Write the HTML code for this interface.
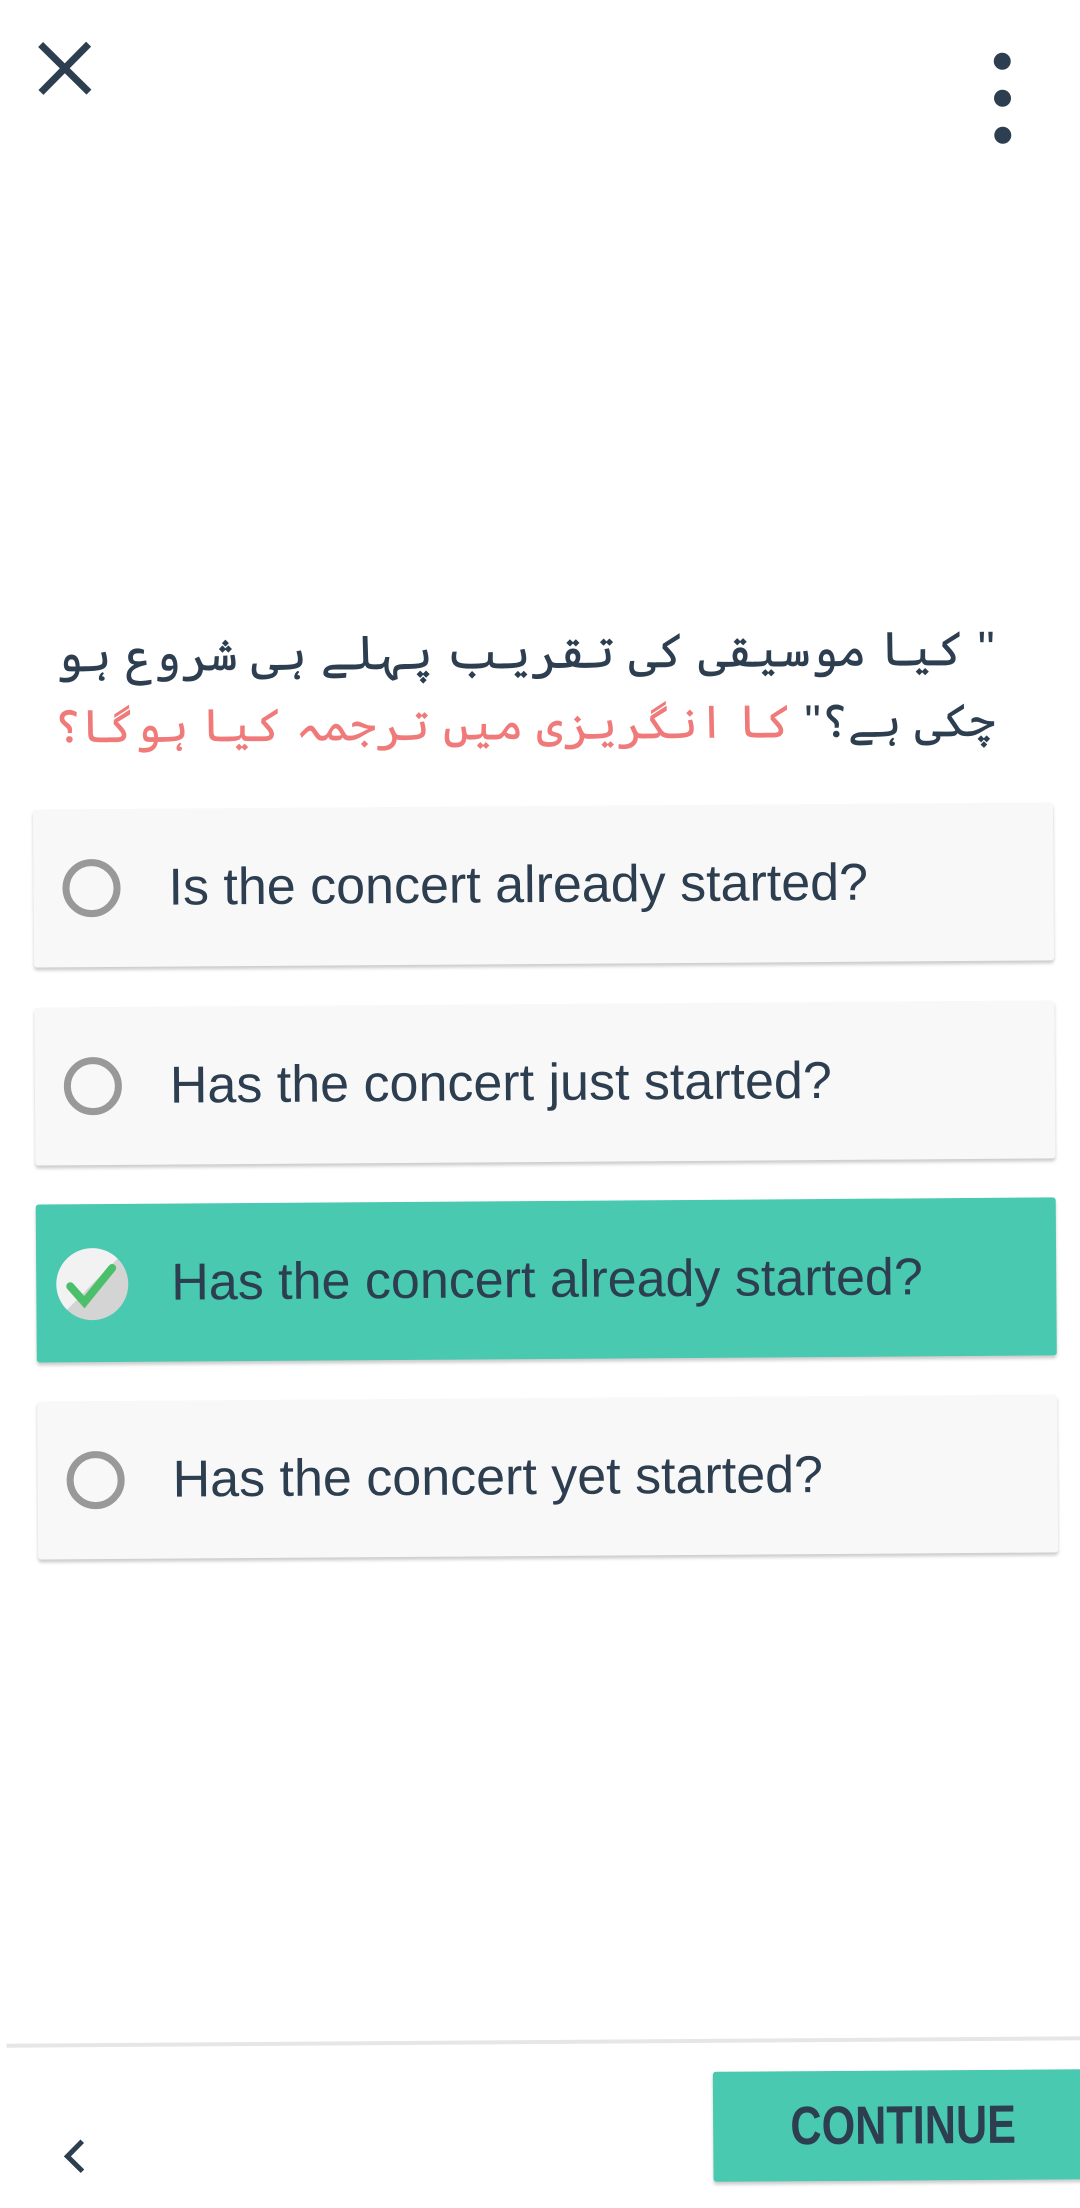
<!DOCTYPE html>
<html><head><meta charset="utf-8"><style>
html,body{margin:0;padding:0;width:1080px;height:2204px;background:#fff;overflow:hidden;font-family:"Liberation Sans",sans-serif;}
.w{position:absolute;left:0;top:0;width:1080px;height:2204px;transform:rotate(-0.4deg);transform-origin:540px 1100px;}
.q{position:absolute;left:20px;width:978px;top:618px;direction:rtl;text-align:right;white-space:nowrap;font-family:"Liberation Sans","Noto Sans CJK SC",sans-serif;font-size:48px;line-height:70px;color:#2c3e50;}
.q span{color:#f07a7a}
.l2{font-size:46px;letter-spacing:-1px}
.card{position:absolute;left:35px;width:1020px;height:158px;background:#f8f8f8;box-shadow:0 3px 3px rgba(0,0,0,.2);border-radius:3px;}
.card.sel{background:#48c9b0}
.card .t{position:absolute;left:135px;top:0;line-height:158px;font-size:52px;color:#2c3e50;}
.radio{position:absolute;left:29px;top:50px;width:44px;height:44px;border:7px solid #999;border-radius:50%;}
.chk{position:absolute;left:20px;top:44px;width:72px;height:72px;border-radius:50%;background:linear-gradient(135deg,#f2f2f2 50%,#d4d4d4 50%);}
</style></head><body>
<div class="w">
<svg style="position:absolute;left:45px;top:38px" width="54" height="54" viewBox="0 0 54 54"><path d="M3 3L51 51M51 3L3 51" stroke="#2c3e50" stroke-width="7"/></svg>
<div style="position:absolute;left:1001px;top:56px;width:17px;height:17px;border-radius:50%;background:#2c3e50"></div>
<div style="position:absolute;left:1001px;top:93px;width:17px;height:17px;border-radius:50%;background:#2c3e50"></div>
<div style="position:absolute;left:1001px;top:130px;width:17px;height:17px;border-radius:50%;background:#2c3e50"></div>
<div class="q">" کیا موسیقی کی تقریب پہلے ہی شروع ہو<br><span class="l2" style="color:#2c3e50">چکی ہے؟" </span><span class="l2">کا انگریزی میں ترجمہ کیا ہوگا؟</span></div>
<div class="card" style="top:806px"><div class="radio"></div><div class="t">Is the concert already started?</div></div>
<div class="card" style="top:1004px"><div class="radio"></div><div class="t">Has the concert just started?</div></div>
<div class="card sel" style="top:1201px"><div class="chk"><svg width="72" height="72" viewBox="0 0 72 72"><path d="M14 38L28 54L56 20" fill="none" stroke="#4cbf6a" stroke-width="8" stroke-linecap="round"/></svg></div><div class="t">Has the concert already started?</div></div>
<div class="card" style="top:1398px"><div class="radio"></div><div class="t">Has the concert yet started?</div></div>
<div style="position:absolute;left:0;top:2040px;width:1080px;height:4px;background:#e6e6e6"></div>
<svg style="position:absolute;left:55px;top:2135px" width="24" height="36" viewBox="0 0 24 36"><path d="M20 3L5 18L20 33" fill="none" stroke="#2c3e50" stroke-width="5"/></svg>
<div style="position:absolute;left:706px;top:2073px;width:390px;height:110px;background:#48c9b0;border-radius:3px;box-shadow:0 3px 3px rgba(0,0,0,.2)"><div style="position:absolute;left:0;width:380px;text-align:center;top:0;line-height:110px;font-size:54px;font-weight:bold;color:#2c3e50;transform:scaleX(.8)">CONTINUE</div></div>
</div>
</body></html>
